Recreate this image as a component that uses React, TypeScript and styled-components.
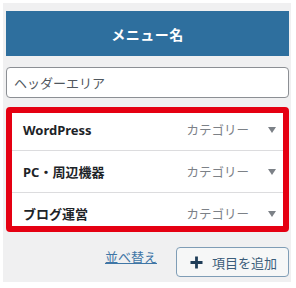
import React from "react";
import styled, { createGlobalStyle } from "styled-components";

const GlobalStyle = createGlobalStyle`
  body {
    margin: 0;
    background: #fff;
    font-family: "Noto Sans", "Noto Sans CJK JP", sans-serif;
  }
`;

const Panel = styled.div`
  margin: 3px 0 0 3px;
  width: 288px;
  height: 279px;
  padding: 8px 2px 0 3px;
  box-sizing: border-box;
  background: #f0f0f1;
  display: flex;
  flex-direction: column;
`;

const MenuHeader = styled.div`
  height: 45px;
  background: #2e6f9e;
  color: #fff;
  font-weight: 700;
  font-size: 14px;
  display: flex;
  align-items: center;
  justify-content: center;
  letter-spacing: 0.5px;
`;

const AreaInput = styled.div`
  margin-top: 11px;
  height: 31px;
  box-sizing: border-box;
  border: 1px solid #8c8f94;
  border-radius: 4px;
  background: #fff;
  padding-left: 7px;
  display: flex;
  align-items: center;
  font-size: 13px;
  color: #50575e;
`;

const Highlight = styled.div`
  margin-top: 9px;
  height: 125px;
  box-sizing: border-box;
  border: 6px solid #e50012;
  border-radius: 4px;
  background: #fff;
  overflow: hidden;
`;

const Rows = styled.div`
  margin-top: -4px;
`;

const Row = styled.div<{ $last?: boolean }>`
  height: 41px;
  display: flex;
  align-items: center;
  padding: 0 7px 0 11px;
  border-bottom: ${(p) => (p.$last ? "none" : "1px solid #dcdcde")};
`;

const Title = styled.span`
  flex: 1;
  font-size: 13px;
  font-weight: 700;
  color: #1d2327;
`;

const Kind = styled.span`
  font-size: 12.5px;
  color: #7c8187;
  margin-right: 19px;
`;

const Caret = styled.span`
  width: 0;
  height: 0;
  border-left: 4px solid transparent;
  border-right: 4px solid transparent;
  border-top: 6px solid #7c8187;
`;

const Footer = styled.div`
  margin-top: 15px;
  display: flex;
  justify-content: flex-end;
  align-items: flex-start;
  gap: 19px;
`;

const SortLink = styled.a`
  margin-top: 1px;
  font-size: 13px;
  color: #3f76a6;
  text-decoration: underline;
  line-height: 18px;
`;

const AddButton = styled.button`
  width: 113px;
  height: 30px;
  box-sizing: border-box;
  border: 1px solid #7f9db6;
  border-radius: 4px;
  background: #f6f7f7;
  display: flex;
  align-items: center;
  justify-content: center;
  gap: 9px;
  padding: 0 0 0 2px;
  font-family: inherit;
  font-size: 13px;
  color: #3b5d7a;
`;

const items = ["WordPress", "PC・周辺機器", "ブログ運営"];

export default function App() {
  return (
    <>
      <GlobalStyle />
      <Panel>
        <MenuHeader>メニュー名</MenuHeader>
        <AreaInput>ヘッダーエリア</AreaInput>
        <Highlight>
          <Rows>
            {items.map((name, i) => (
              <Row key={name} $last={i === items.length - 1}>
                <Title>{name}</Title>
                <Kind>カテゴリー</Kind>
                <Caret />
              </Row>
            ))}
          </Rows>
        </Highlight>
        <Footer>
          <SortLink>並べ替え</SortLink>
          <AddButton>
            <svg width="13" height="13" viewBox="0 0 13 13">
              <path d="M6.5 0.5v12M0.5 6.5h12" stroke="#1f3d58" strokeWidth="2.8" />
            </svg>
            項目を追加
          </AddButton>
        </Footer>
      </Panel>
    </>
  );
}
